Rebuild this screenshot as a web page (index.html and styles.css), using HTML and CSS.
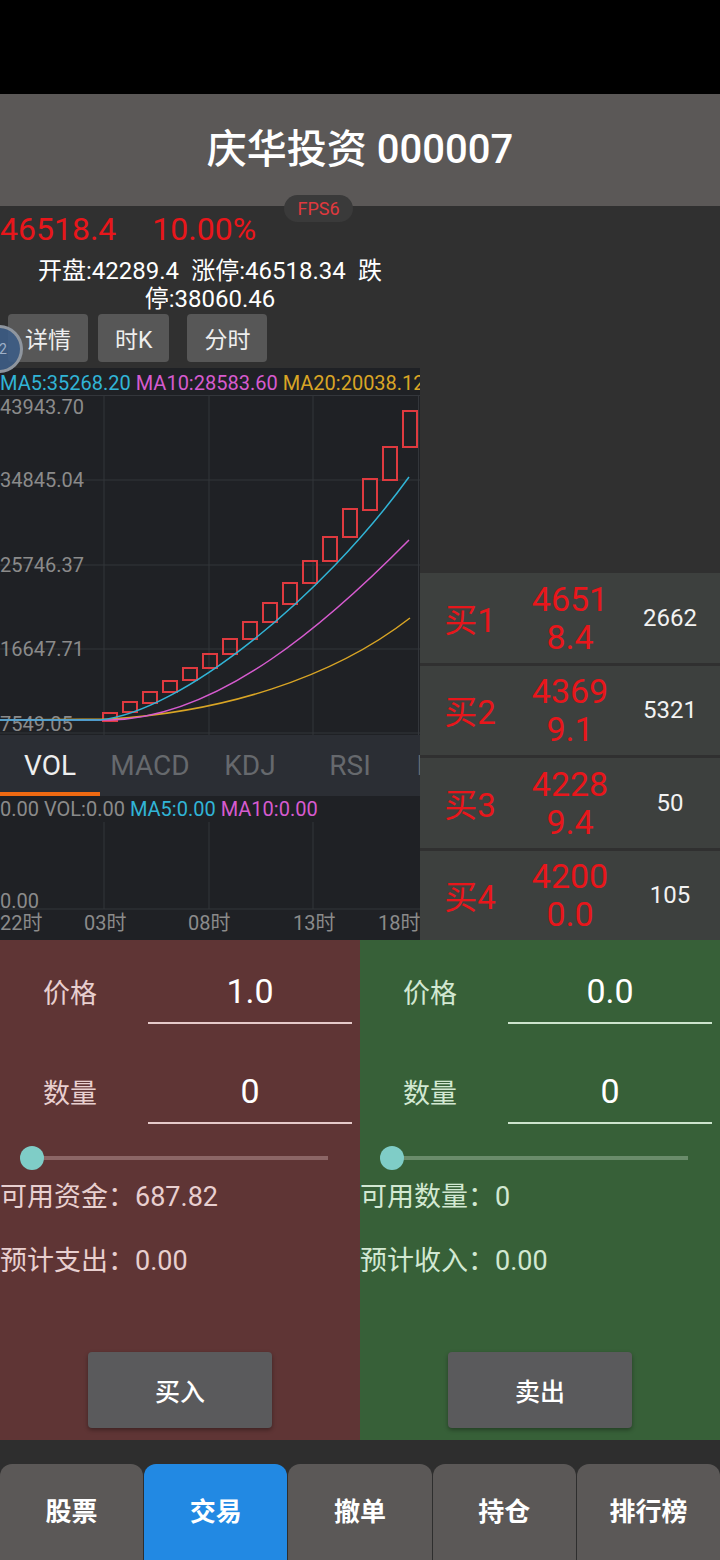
FILE: index.html
```html
<!DOCTYPE html>
<html lang="zh-CN">
<head>
  <meta charset="UTF-8">
  <title>庆华投资 000007</title>
  <link rel="stylesheet" href="styles.css">
</head>
<body>

  <div class="status-bar"></div>
  <header class="title-bar">庆华投资 000007</header>
  <div class="fps">FPS6</div>

  <main class="market">
    <section class="quote">
      <div class="quote-price"><span>46518.4</span><span>10.00%</span></div>
      <div class="quote-info">开盘:42289.4&ensp;涨停:46518.34&ensp;跌<br>停:38060.46</div>

      <div class="views">
        <button class="view-btn">详情</button>
        <button class="view-btn">时K</button>
        <button class="view-btn view-btn-last">分时</button>
      </div>
      <div class="float-ball">22</div>

      <div class="chart">
        <div class="legend">
          <span class="ma5">MA5:35268.20</span> <span class="ma10">MA10:28583.60</span> <span class="ma20">MA20:20038.12</span>
        </div>
        <svg class="kline" width="420" height="340" viewBox="0 395 420 340">
          <g class="grid">
            <line x1="0" y1="395.5" x2="420" y2="395.5"/>
            <line x1="0" y1="480" x2="420" y2="480"/>
            <line x1="0" y1="565" x2="420" y2="565"/>
            <line x1="0" y1="649" x2="420" y2="649"/>
            <line x1="0" y1="733" x2="420" y2="733"/>
            <line x1="104" y1="395" x2="104" y2="735"/>
            <line x1="209" y1="395" x2="209" y2="735"/>
            <line x1="313" y1="395" x2="313" y2="735"/>
            <line x1="418.5" y1="395" x2="418.5" y2="735"/>
          </g>
          <text x="0" y="414">43943.70</text>
          <text x="0" y="487">34845.04</text>
          <text x="0" y="572">25746.37</text>
          <text x="0" y="656">16647.71</text>
          <text x="0" y="731">7549.05</text>
          <g class="candles">
            <rect x="103" y="713" width="14" height="8"/>
            <rect x="123" y="702" width="14" height="10"/>
            <rect x="143" y="692" width="14" height="11"/>
            <rect x="163" y="681" width="14" height="11"/>
            <rect x="183" y="668" width="14" height="12"/>
            <rect x="203" y="654" width="14" height="14"/>
            <rect x="223" y="639" width="14" height="15"/>
            <rect x="243" y="622" width="14" height="17"/>
            <rect x="263" y="603" width="14" height="19"/>
            <rect x="283" y="583" width="14" height="21"/>
            <rect x="303" y="561" width="14" height="22"/>
            <rect x="323" y="537" width="14" height="24"/>
            <rect x="343" y="509" width="14" height="28"/>
            <rect x="363" y="479" width="14" height="31"/>
            <rect x="383" y="447" width="14" height="33"/>
            <rect x="403" y="411" width="14" height="36"/>
          </g>
          <path class="line-ma20" d="M0,720 L110,719 C220,712 330,680 410,618"/>
          <path class="line-ma10" d="M0,720 L110,720 C220,718 330,620 409,540"/>
          <path class="line-ma5" d="M0,720 L100,720 C180,712 320,600 409,477"/>
        </svg>
      </div>

      <div class="ind-tabs">
        <span class="ind-tab active">VOL</span>
        <span class="ind-tab">MACD</span>
        <span class="ind-tab">KDJ</span>
        <span class="ind-tab">RSI</span>
        <span class="ind-tab">BOLL</span>
      </div>

      <div class="vol">
        <div class="legend vol-legend">
          <span>0.00 VOL:0.00</span> <span class="ma5">MA5:0.00</span> <span class="ma10">MA10:0.00</span>
        </div>
        <svg class="kline" width="420" height="118" viewBox="0 822 420 118">
          <g class="grid">
            <line x1="104" y1="796" x2="104" y2="909"/>
            <line x1="209" y1="796" x2="209" y2="909"/>
            <line x1="313" y1="796" x2="313" y2="909"/>
            <line x1="0" y1="909" x2="420" y2="909"/>
          </g>
          <text x="0" y="908">0.00</text>
          <text x="0" y="930">22时</text>
          <text x="84" y="930">03时</text>
          <text x="188" y="930">08时</text>
          <text x="293" y="930">13时</text>
          <text x="378" y="930">18时</text>
        </svg>
      </div>
    </section>

    <section class="book">
      <div class="book-row"><span class="book-lvl">买1</span><span class="book-price">4651<br>8.4</span><span class="book-vol">2662</span></div>
      <div class="book-row"><span class="book-lvl">买2</span><span class="book-price">4369<br>9.1</span><span class="book-vol">5321</span></div>
      <div class="book-row"><span class="book-lvl">买3</span><span class="book-price">4228<br>9.4</span><span class="book-vol">50</span></div>
      <div class="book-row"><span class="book-lvl">买4</span><span class="book-price">4200<br>0.0</span><span class="book-vol">105</span></div>
    </section>
  </main>

  <section class="trade">
    <div class="panel panel-buy">
      <div class="field"><span class="field-label">价格</span><span class="field-input">1.0</span></div>
      <div class="field field-second"><span class="field-label">数量</span><span class="field-input">0</span></div>
      <div class="slider"><span class="slider-thumb"></span></div>
      <p class="info">可用资金：687.82</p>
      <p class="info">预计支出：0.00</p>
      <button class="submit">买入</button>
    </div>
    <div class="panel panel-sell">
      <div class="field"><span class="field-label">价格</span><span class="field-input">0.0</span></div>
      <div class="field field-second"><span class="field-label">数量</span><span class="field-input">0</span></div>
      <div class="slider"><span class="slider-thumb"></span></div>
      <p class="info">可用数量：0</p>
      <p class="info">预计收入：0.00</p>
      <button class="submit">卖出</button>
    </div>
  </section>

  <nav class="tabbar">
    <a class="tab">股票</a>
    <a class="tab active">交易</a>
    <a class="tab">撤单</a>
    <a class="tab">持仓</a>
    <a class="tab">排行榜</a>
  </nav>

</body>
</html>
```

FILE: styles.css
```css
* {
  box-sizing: border-box;
}

body {
  margin: 0;
  width: 720px;
  height: 1560px;
  overflow: hidden;
  position: relative;
  background: #303030;
  color: #fff;
  font-family: Roboto, "Noto Sans CJK SC", sans-serif;
}

.status-bar {
  height: 94px;
  background: #000;
}

.title-bar {
  height: 112px;
  line-height: 112px;
  background: #5b5857;
  text-align: center;
  font-size: 40px;
  font-weight: 500;
}

.fps {
  position: absolute;
  top: 195px;
  left: 284px;
  width: 69px;
  height: 27px;
  line-height: 27px;
  border-radius: 14px;
  background: #3a3a3a;
  color: #e0393e;
  font-size: 18px;
  text-align: center;
  z-index: 2;
}

.market {
  display: grid;
  grid-template-columns: 420px 300px;
  height: 734px;
}

/* left column: quote + chart */
.quote {
  position: relative;
  overflow: hidden;
}

.quote-price {
  display: flex;
  gap: 36px;
  height: 46px;
  line-height: 46px;
  font-size: 32px;
  color: #e8161b;
}

.quote-info {
  margin-top: 5px;
  line-height: 28px;
  font-size: 24px;
  text-align: center;
}

.views {
  display: flex;
  gap: 10px;
  height: 48px;
  margin-top: 1px;
  padding-left: 8px;
}

.view-btn {
  font: inherit;
  font-size: 23px;
  height: 48px;
  padding: 0 17px;
  border: none;
  border-radius: 4px;
  background: #575757;
  color: #eee;
}

.view-btn-last {
  margin-left: 8px;
}

.float-ball {
  position: absolute;
  top: 119px;
  left: -25px;
  z-index: 1;
  width: 48px;
  height: 48px;
  border-radius: 50%;
  border: 3px solid rgba(170, 170, 170, 0.75);
  background: rgba(61, 92, 132, 0.92);
  color: #9fb0c8;
  font-size: 14px;
  line-height: 42px;
  text-align: center;
}

.chart {
  height: 367px;
  margin-top: 6px;
  background: #1f2125;
}

.legend {
  height: 27px;
  line-height: 31px;
  font-size: 20px;
  white-space: nowrap;
  overflow: hidden;
  color: #8b8b8b;
}

.ma5 { color: #31b4d6; }
.ma10 { color: #d65bcf; }
.ma20 { color: #d9a525; }

.kline {
  display: block;
}

.kline text {
  font-size: 20px;
  fill: #8b8b8b;
}

.grid line {
  stroke: #33363b;
  stroke-width: 1;
}

.candles rect {
  fill: none;
  stroke: #df3a3f;
  stroke-width: 2;
}

.line-ma5, .line-ma10, .line-ma20 {
  fill: none;
  stroke-width: 1.5;
}

.line-ma5 { stroke: #31b4d6; }
.line-ma10 { stroke: #d65bcf; }
.line-ma20 { stroke: #d9a525; }

.ind-tabs {
  display: flex;
  height: 61px;
  background: #2b2e34;
  white-space: nowrap;
}

.ind-tab {
  flex: 0 0 100px;
  text-align: center;
  line-height: 62px;
  font-size: 28px;
  color: #66696d;
}

.ind-tab.active {
  color: #eee;
  box-shadow: inset 0 -4px 0 #f06a12;
}

.vol {
  height: 144px;
  background: #1f2125;
}

.vol-legend {
  height: 26px;
  line-height: 26px;
}

/* right column: order book */
.book {
  display: flex;
  flex-direction: column;
  gap: 3px;
  padding-top: 367px;
}

.book-row {
  flex: 1;
  display: grid;
  grid-template-columns: 100px 100px 100px;
  align-items: center;
  text-align: center;
  background: #3d403e;
}

.book-lvl {
  font-size: 33px;
  color: #e8161b;
}

.book-price {
  font-size: 34px;
  line-height: 38px;
  color: #e8161b;
}

.book-vol {
  font-size: 24px;
  color: #f2f2f2;
}

/* trade panels */
.trade {
  display: grid;
  grid-template-columns: 360px 360px;
  height: 500px;
}

.panel {
  display: flex;
  flex-direction: column;
  padding-bottom: 12px;
}

.panel-buy {
  background: #5f3535;
  color: #e8cfcf;
}

.panel-sell {
  background: #376038;
  color: #d2e8d2;
}

.field {
  display: flex;
  align-items: flex-end;
  height: 84px;
  padding: 0 8px 0 43px;
}

.field-second {
  height: 100px;
}

.field-label {
  height: 62px;
  line-height: 64px;
  font-size: 27px;
}

.field-input {
  width: 204px;
  height: 64px;
  margin-left: auto;
  line-height: 62px;
  text-align: center;
  font-size: 34px;
  color: #fff;
  border-bottom: 2px solid #e6caca;
}

.panel-sell .field-input {
  border-bottom-color: #cde4cd;
}

.slider {
  position: relative;
  height: 4px;
  margin: 32px 32px 0;
  background: #8c6666;
}

.panel-sell .slider {
  background: #6a8c6b;
}

.slider-thumb {
  position: absolute;
  top: -10px;
  left: -12px;
  width: 24px;
  height: 24px;
  border-radius: 50%;
  background: #7fcdc7;
}

.info {
  margin: 17px 0 0;
  line-height: 40px;
  font-size: 27px;
}

.info + .info {
  margin-top: 24px;
}

.submit {
  align-self: center;
  width: 184px;
  height: 76px;
  margin-top: auto;
  border: none;
  border-radius: 4px;
  background: #5a5a5c;
  color: #fff;
  font: inherit;
  font-size: 25px;
  font-weight: 500;
  box-shadow: 0 2px 4px rgba(0, 0, 0, 0.35);
}

/* bottom tabs */
.tabbar {
  display: grid;
  grid-template-columns: repeat(5, 1fr);
  gap: 1px;
  height: 120px;
  padding-top: 24px;
  background: #2e2e2e;
}

.tab {
  border-radius: 12px 12px 0 0;
  background: #5b5857;
  text-align: center;
  line-height: 96px;
  font-size: 26px;
  font-weight: 700;
  color: #fff;
}

.tab.active {
  background: #2289e3;
}
```
